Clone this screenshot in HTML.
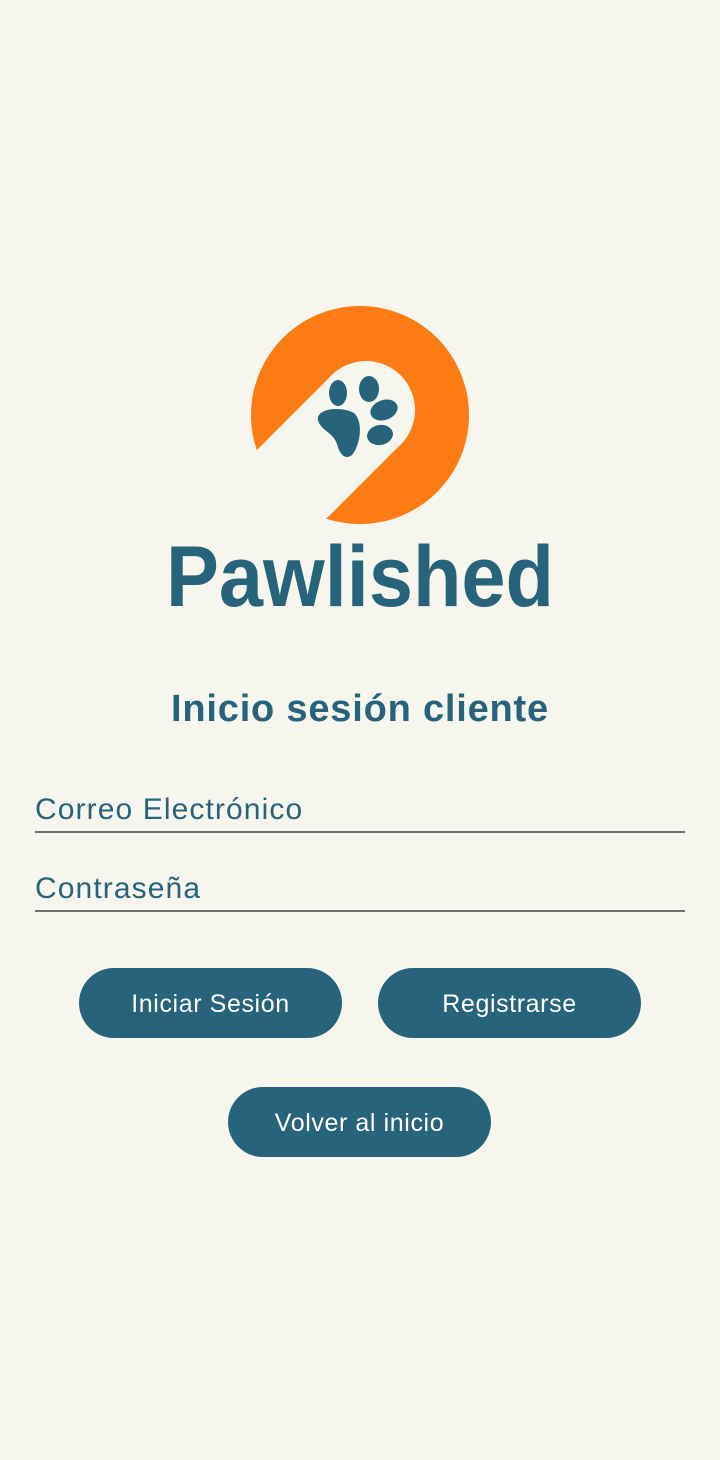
<!DOCTYPE html>
<html><head><meta charset="utf-8"><style>
body{margin:0;width:720px;height:1460px;background:#f7f6ee;font-family:"Liberation Sans",sans-serif;position:relative;overflow:hidden}
.a{position:absolute}
.lbl{left:35px;color:#27637a;font-size:30px;white-space:nowrap;letter-spacing:1.1px}
.line{left:35px;width:650px;height:2px;background:#707070}
.btn{background:#27637a;color:#fff;border-radius:35px;height:70px;line-height:72px;text-align:center;font-size:25px;letter-spacing:0.6px;width:263px}
</style></head><body>
<svg class="a" style="left:0;top:0" width="720" height="640">
<circle cx="360" cy="415" r="109" fill="#fd7c14"/>
<polygon points="257,450 333,374 402,443 326,519 240,620 160,520" fill="#f7f6ee"/>
<circle cx="366" cy="410" r="49" fill="#f7f6ee"/>
<g fill="#27637a">
<ellipse cx="338" cy="393" rx="9" ry="13"/>
<ellipse cx="369" cy="389" rx="10" ry="13"/>
<ellipse cx="384" cy="410" rx="14" ry="10" transform="rotate(-20 384 410)"/>
<ellipse cx="380" cy="435" rx="13" ry="10" transform="rotate(-10 380 435)"/>
<path d="M318,420 C316,408 342,406 354,413 C364,422 360,446 352,455 C344,461 339,452 337,444 C333,432 320,430 318,420Z"/>
</g>
<text x="360" y="606" text-anchor="middle" font-family="Liberation Sans" font-weight="bold" font-size="86" fill="#27637a" textLength="388" lengthAdjust="spacingAndGlyphs">Pawlished</text>
</svg>
<div class="a" style="left:0;width:720px;top:688px;text-align:center;font-weight:bold;font-size:38px;letter-spacing:0.8px;color:#27637a">Inicio sesión cliente</div>
<div class="a lbl" style="top:793px">Correo Electrónico</div>
<div class="a line" style="top:831px"></div>
<div class="a lbl" style="top:872px">Contraseña</div>
<div class="a line" style="top:910px"></div>
<div class="a btn" style="left:79px;top:968px">Iniciar Sesión</div>
<div class="a btn" style="left:378px;top:968px">Registrarse</div>
<div class="a btn" style="left:228px;top:1087px">Volver al inicio</div>
</body></html>
